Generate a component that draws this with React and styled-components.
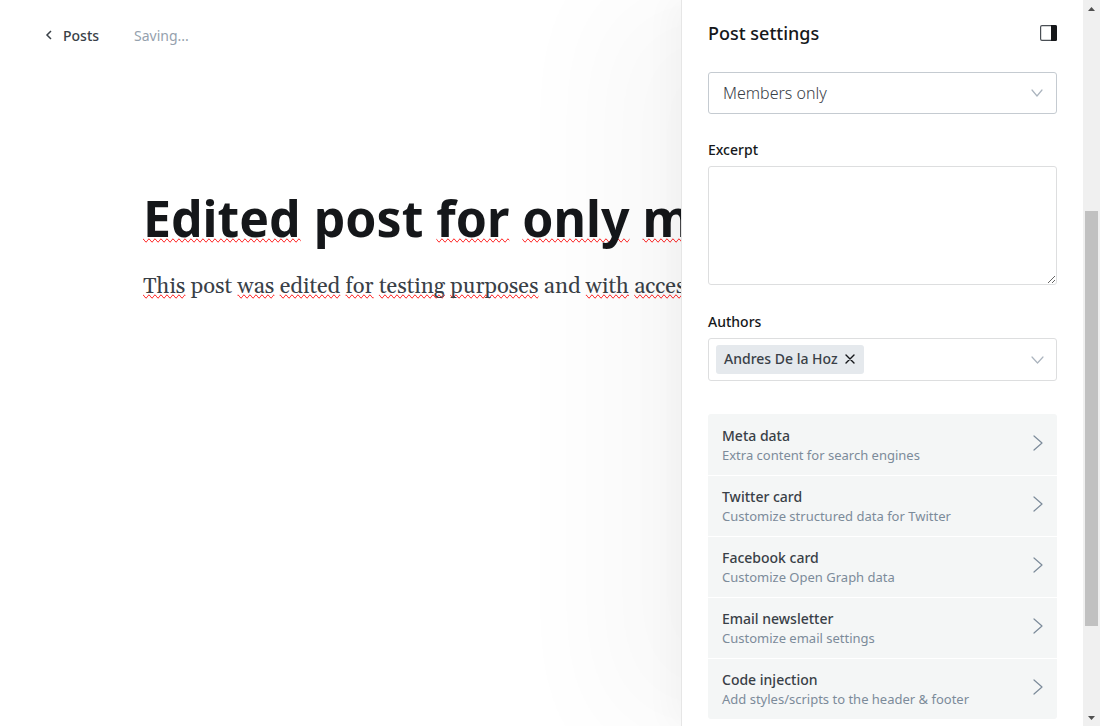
import React, { useState } from "react";
import styled, { createGlobalStyle } from "styled-components";

const GlobalStyle = createGlobalStyle`
  *, *::before, *::after { box-sizing: border-box; }
  body {
    margin: 0;
    background: #fff;
    color: #15171a;
    font-family: "Noto Sans", "Open Sans", sans-serif;
    font-size: 14px;
  }
  button, select, textarea { font: inherit; color: inherit; }
`;

const Screen = styled.div`
  display: flex;
  height: 100vh;
  overflow: hidden;
`;

const Editor = styled.main`
  flex: 1;
  min-width: 0;
  overflow: hidden;
`;

const EditorBar = styled.header`
  display: flex;
  align-items: center;
  gap: 35px;
  height: 70px;
  padding-left: 45px;
`;

const BackLink = styled.a`
  display: flex;
  align-items: center;
  gap: 9px;
  color: #394047;
  font-weight: 500;
  text-decoration: none;
`;

const SaveStatus = styled.span`
  color: #95a1ad;
`;

const Canvas = styled.article`
  padding: 114px 0 0 143px;
  white-space: nowrap;
`;

const PostTitle = styled.h1`
  margin: 0;
  font-size: 50px;
  line-height: 68px;
  font-weight: 700;
`;

const PostBody = styled.p`
  margin: 19px 0 0;
  color: #394047;
  font-family: Gelasio, Georgia, "Liberation Serif", serif;
  font-size: 22px;
  line-height: 32px;
`;

const Misspelled = styled.span`
  text-decoration: spelling-error;
`;

const Panel = styled.aside`
  position: relative;
  flex: none;
  width: 402px;
  padding: 0 26px;
  border-left: 1px solid #e6e6e6;
  background: #fff;
  box-shadow:
    -10px 0 30px rgba(0, 0, 0, 0.03),
    -76px 0 106px rgba(0, 0, 0, 0.03);
`;

const PanelHeader = styled.header`
  display: flex;
  align-items: center;
  justify-content: space-between;
  height: 72px;
  padding-bottom: 6px;
`;

const PanelTitle = styled.h2`
  margin: 0;
  font-size: 18px;
  font-weight: 500;
`;

const IconButton = styled.button`
  display: flex;
  padding: 0;
  border: 0;
  background: none;
  cursor: pointer;
`;

const SelectWrap = styled.div`
  display: grid;
  align-items: center;

  > * { grid-area: 1 / 1; }
  > svg { justify-self: end; margin-right: 14px; pointer-events: none; }
`;

const Select = styled.select`
  width: 100%;
  height: 42px;
  padding: 0 14px;
  border: 1px solid #c5cbd1;
  border-radius: 3px;
  background: #fff;
  color: #394047;
  font-size: 16px;
  font-weight: 300;
  appearance: none;
`;

const Field = styled.div`
  display: flex;
  flex-direction: column;
  gap: 6px;
  margin-top: 26px;

  & + & { margin-top: 27px; }
`;

const Label = styled.label`
  font-size: 14px;
  line-height: 20px;
  font-weight: 500;
`;

const TextArea = styled.textarea`
  display: block;
  width: 100%;
  height: 119px;
  padding: 10px 14px;
  border: 1px solid #dddedf;
  border-radius: 3px;
  background: #fff;
  resize: vertical;
`;

const TokenBox = styled.div`
  display: flex;
  align-items: center;
  justify-content: space-between;
  height: 43px;
  padding: 0 12px 0 7px;
  border: 1px solid #dddedf;
  border-radius: 3px;
`;

const Token = styled.span`
  display: flex;
  align-items: center;
  gap: 7px;
  height: 29px;
  padding: 0 9px 2px 8px;
  border-radius: 3px;
  background: #e5e9ed;
  color: #394047;
  font-size: 14px;
  font-weight: 500;
`;

const Menu = styled.nav`
  display: flex;
  flex-direction: column;
  margin-top: 33px;
  border-radius: 3px;
  overflow: hidden;
`;

const MenuRow = styled.button`
  display: flex;
  align-items: center;
  justify-content: space-between;
  height: 61px;
  padding: 0 14px 4px 14px;
  border: 0;
  background: #f4f6f6;
  text-align: left;
  cursor: pointer;

  & + & { border-top: 1px solid #fff; }
`;

const RowText = styled.span`
  display: flex;
  flex-direction: column;
  padding-top: 4px;
`;

const RowTitle = styled.span`
  color: #394047;
  font-size: 14px;
  line-height: 20px;
  font-weight: 500;
`;

const RowNote = styled.span`
  color: #7c8b9a;
  font-size: 13px;
  line-height: 18px;
`;

const ScrollTrack = styled.div`
  position: relative;
  display: flex;
  flex-direction: column;
  align-items: center;
  flex: none;
  width: 17px;
  background: #f0f0f0;
`;

const ScrollArrow = styled.button`
  display: flex;
  align-items: center;
  justify-content: center;
  width: 17px;
  height: 17px;
  padding: 0;
  border: 0;
  background: none;
`;

const ScrollSpace = styled.div`
  flex: ${(p) => p.$grow};
`;

const ScrollThumb = styled.div`
  flex: 415;
  width: 13px;
  background: #c1c1c1;
`;

const Chevron = ({ width, height, points, color }) => (
  <svg width={width} height={height} fill="none" stroke={color} strokeWidth="1.2" strokeLinecap="round" strokeLinejoin="round" aria-hidden="true">
    <polyline points={points} />
  </svg>
);

const SidebarIcon = () => (
  <svg width="17" height="16" viewBox="0 0 17 16" aria-hidden="true">
    <rect x="0.6" y="0.6" width="15.8" height="14.8" rx="1.4" fill="#fff" stroke="#4a4f55" strokeWidth="1.2" />
    <path d="M11 0h4.4A1.6 1.6 0 0 1 17 1.6v12.8a1.6 1.6 0 0 1-1.6 1.6H11z" fill="#15171a" />
  </svg>
);

const sections = [
  ["Meta data", "Extra content for search engines"],
  ["Twitter card", "Customize structured data for Twitter"],
  ["Facebook card", "Customize Open Graph data"],
  ["Email newsletter", "Customize email settings"],
  ["Code injection", "Add styles/scripts to the header & footer"],
];

const Spelled = ({ words }) =>
  words.map(([word, wrong], i) => (
    <React.Fragment key={i}>
      {i > 0 && " "}
      {wrong ? <Misspelled>{word}</Misspelled> : word}
    </React.Fragment>
  ));

const titleWords = [["Edited", 1], ["post", 0], ["for", 1], ["only", 1], ["members", 1]];
const bodyWords = [
  ["This", 1], ["post", 0], ["was", 1], ["edited", 1], ["for", 1], ["testing", 1],
  ["purposes", 1], ["and", 0], ["with", 1], ["access", 1],
];

export default function App() {
  const [access, setAccess] = useState("members");
  const [excerpt, setExcerpt] = useState("");

  return (
    <>
      <GlobalStyle />
      <Screen>
        <Editor>
          <EditorBar>
            <BackLink href="#posts">
              <svg width="9" height="10" fill="none" stroke="#394047" strokeWidth="1.5" aria-hidden="true">
                <polyline points="6,1 2,5 6,9" />
              </svg>
              Posts
            </BackLink>
            <SaveStatus>Saving...</SaveStatus>
          </EditorBar>
          <Canvas>
            <PostTitle><Spelled words={titleWords} /></PostTitle>
            <PostBody><Spelled words={bodyWords} /></PostBody>
          </Canvas>
        </Editor>
        <Panel>
          <PanelHeader>
            <PanelTitle>Post settings</PanelTitle>
            <IconButton aria-label="Toggle settings"><SidebarIcon /></IconButton>
          </PanelHeader>
          <SelectWrap>
            <Select aria-label="Post access" value={access} onChange={(e) => setAccess(e.target.value)}>
              <option value="members">Members only</option>
            </Select>
            <Chevron width="12" height="9" points="1,1 6,7 11,1" color="#abb4be" />
          </SelectWrap>
          <Field>
            <Label htmlFor="excerpt">Excerpt</Label>
            <TextArea id="excerpt" value={excerpt} onChange={(e) => setExcerpt(e.target.value)} />
          </Field>
          <Field>
            <Label htmlFor="authors">Authors</Label>
            <TokenBox>
              <Token>
                Andres De la Hoz
                <IconButton aria-label="Remove Andres De la Hoz">
                  <svg width="10" height="10" stroke="#15171a" strokeWidth="1.4" strokeLinecap="round" aria-hidden="true">
                    <path d="M1 1l8 8M9 1l-8 8" />
                  </svg>
                </IconButton>
              </Token>
              <IconButton id="authors" aria-label="Choose authors">
                <Chevron width="13" height="8" points="1,1 6.5,7 12,1" color="#abb4be" />
              </IconButton>
            </TokenBox>
          </Field>
          <Menu>
            {sections.map(([title, note]) => (
              <MenuRow key={title}>
                <RowText>
                  <RowTitle>{title}</RowTitle>
                  <RowNote>{note}</RowNote>
                </RowText>
                <Chevron width="10" height="16" points="1,1 9,8 1,15" color="#7c8b9a" />
              </MenuRow>
            ))}
          </Menu>
        </Panel>
        <ScrollTrack>
          <ScrollArrow aria-label="Scroll up">
            <svg width="7" height="4" aria-hidden="true"><path d="M0 4L3.5 0L7 4z" fill="#505050" /></svg>
          </ScrollArrow>
          <ScrollSpace $grow={194} />
          <ScrollThumb />
          <ScrollSpace $grow={83} />
          <ScrollArrow aria-label="Scroll down">
            <svg width="7" height="4" aria-hidden="true"><path d="M0 0L3.5 4L7 0z" fill="#505050" /></svg>
          </ScrollArrow>
        </ScrollTrack>
      </Screen>
    </>
  );
}
